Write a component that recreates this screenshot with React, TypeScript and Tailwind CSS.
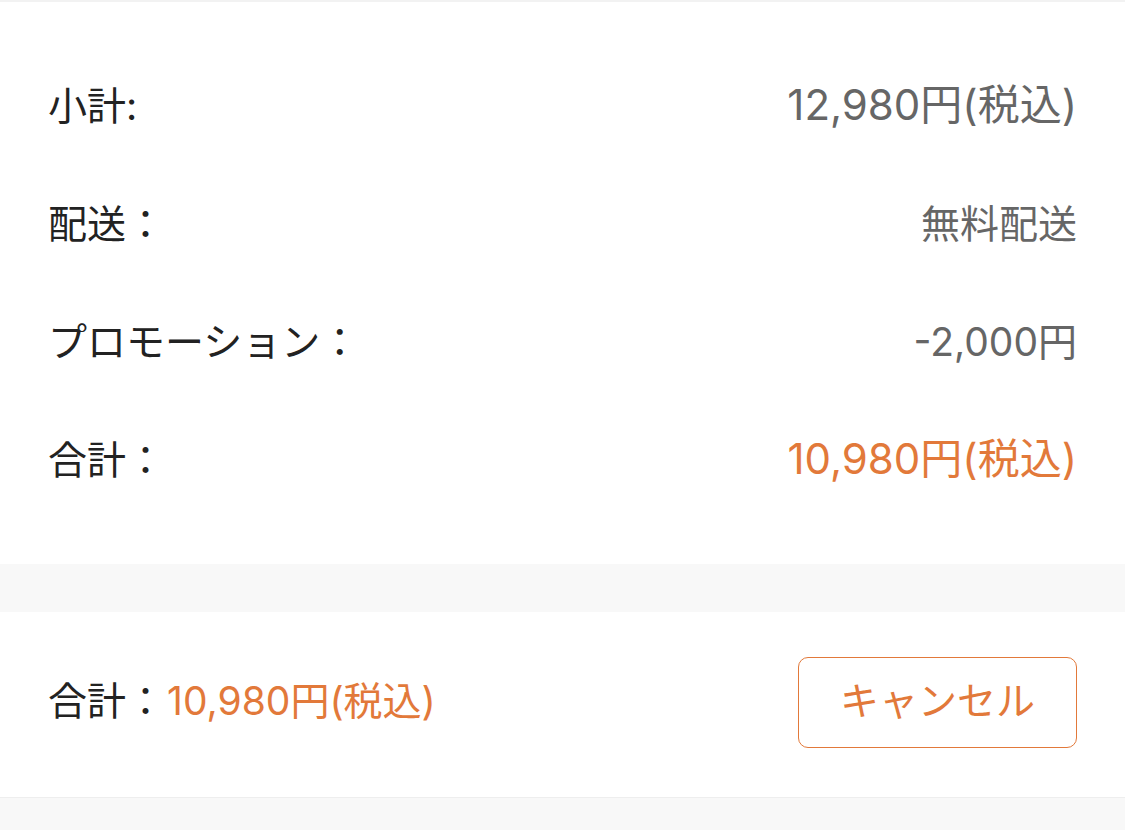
export default function App() {
  const font = { fontFamily: 'Inter, "Noto Sans CJK JP", sans-serif' };
  const rows: { label: string; value: string; orange?: boolean; big?: boolean }[] = [
    { label: "小計:", value: "12,980円(税込)", big: true },
    { label: "配送：", value: "無料配送" },
    { label: "プロモーション：", value: "-2,000円" },
    { label: "合計：", value: "10,980円(税込)", orange: true, big: true },
  ];
  return (
    <div className="w-[1125px] h-[830px] bg-[#f8f8f8] overflow-hidden" style={font}>
      <div className="bg-white border-t-2 border-[#f2f2f2] pt-[44px] pb-[46px] px-[48px]">
        {rows.map((r) => (
          <div key={r.label} className="h-[118px] flex items-center justify-between text-[39px] leading-none">
            <span className="text-[#222222]">{r.label}</span>
            <span
              className={
                (r.orange ? "text-[#e2793a]" : "text-[#666666]") +
                (r.big ? " text-[42px]" : " text-[39px]")
              }
            >
              {r.value}
            </span>
          </div>
        ))}
      </div>
      <div className="h-[48px]" />
      <div className="bg-white h-[186px] px-[48px] flex items-center justify-between border-b border-[#eeeeee]">
        <div className="flex items-center text-[39px] leading-none -mt-[8px]">
          <span className="text-[#222222]">合計：</span>
          <span className="text-[#e2793a] ml-[2px]">10,980円(税込)</span>
        </div>
        <button className="w-[279px] h-[91px] -mt-[4px] rounded-[10px] border border-[#e2793a] text-[#e2793a] text-[39px] leading-none flex items-center justify-center bg-white">
          <span className="-mt-[4px]">キャンセル</span>
        </button>
      </div>
    </div>
  );
}
